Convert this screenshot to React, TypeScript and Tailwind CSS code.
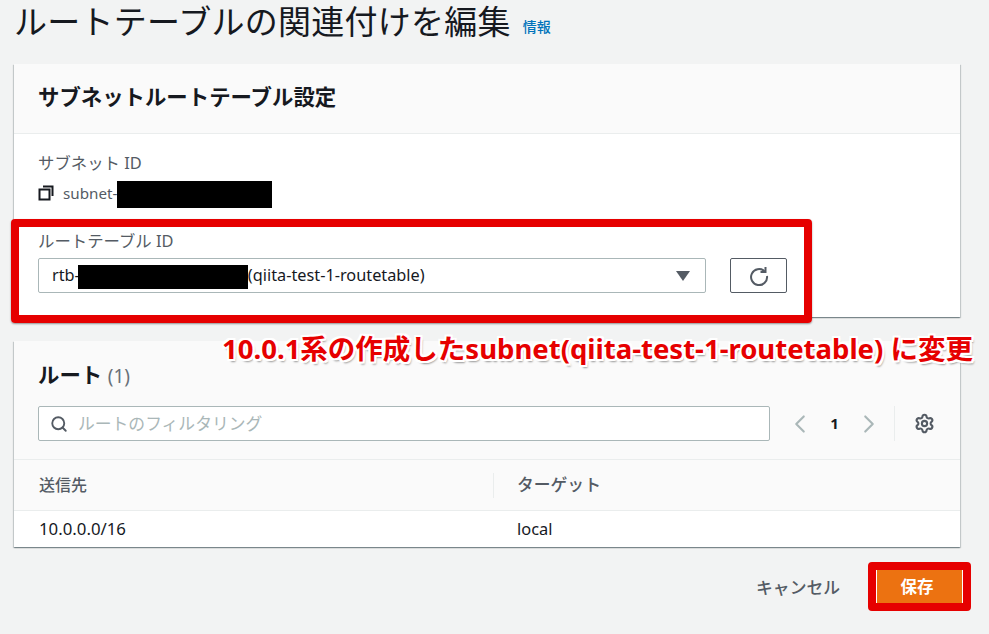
import React from 'react';
import { ChevronLeft, ChevronRight, Search, Settings } from 'lucide-react';

const FONT = '[font-family:"Noto_Sans","Noto_Sans_CJK_JP",sans-serif]';

export default function App() {
  return (
    <div className={`relative h-[634px] w-[989px] overflow-hidden bg-[#f2f3f3] text-[#16191f] ${FONT}`}>
      {/* title */}
      <div className="flex h-[64px] items-start pl-[14px]">
        <h1 className="text-[33px] leading-[44px] font-normal tracking-[0.25px] whitespace-nowrap text-[#16191f]">ルートテーブルの関連付けを編集</h1>
        <a className="mt-[17px] ml-[12px] text-[14px] leading-[20px] font-medium text-[#0073bb]">情報</a>
      </div>

      <div className="ml-[14px] w-[946px]">
        {/* settings card */}
        <section className="h-[253px] bg-white shadow-[0_1px_1px_0_rgba(0,28,36,0.3),1px_1px_1px_0_rgba(0,28,36,0.15),-1px_1px_1px_0_rgba(0,28,36,0.15)]">
          <div className="flex h-[70px] items-center border-b border-[#eaeded] bg-[#fafafa] pb-[3px] pl-[24px]">
            <h2 className="text-[21.4px] leading-[24px] font-bold">サブネットルートテーブル設定</h2>
          </div>
          <div className="pt-[19px] pl-[24px]">
            <div className="text-[16.4px] leading-[20px] text-[#545b64]">サブネット ID</div>
            <div className="mt-[10px] flex h-[20px] items-center gap-[9px] text-[15.2px] text-[#545b64]">
              <svg width="16" height="16" viewBox="0 0 16 16" fill="none" stroke="#16191f" strokeWidth="2">
                <rect x="1.5" y="4.5" width="10" height="10" />
                <path d="M5 1.5h9.5V11" />
              </svg>
              <span>subnet-</span>
            </div>
            <div className="mt-[28px] text-[16.4px] leading-[20px] text-[#545b64]">ルートテーブル ID</div>
            <div className="mt-[7px] flex items-center gap-[24px]">
              <div className="flex h-[35px] w-[668px] items-center justify-between rounded-[2px] border border-[#aab7b8] pr-[15px] pl-[13px] text-[16.3px] text-[#16191f]">
                <span className="whitespace-nowrap">
                  rtb-<span className="inline-block w-[168px]"></span>(qiita-test-1-routetable)
                </span>
                <span className="h-0 w-0 border-x-[7px] border-t-[10px] border-x-transparent border-t-[#545b64]"></span>
              </div>
              <button className="flex h-[35px] w-[57px] items-center justify-center rounded-[2px] border border-[#545b64] bg-white">
                <svg width="20" height="20" viewBox="0 0 20 20" fill="none" stroke="#545b64" strokeWidth="2">
                  <path d="M15.5 5.2A8 8 0 1 0 18 10" />
                  <path d="M16.5 1v5h-5" />
                </svg>
              </button>
            </div>
          </div>
        </section>

        {/* routes card */}
        <section className="mt-[24px] h-[206px] bg-white shadow-[0_1px_1px_0_rgba(0,28,36,0.3),1px_1px_1px_0_rgba(0,28,36,0.15),-1px_1px_1px_0_rgba(0,28,36,0.15)]">
          <div className="h-[119px] border-b border-[#eaeded] bg-[#fafafa] px-[24px]">
            <h2 className="pt-[20px] text-[21.4px] leading-[28px] font-bold whitespace-nowrap">
              ルート <span className="text-[19px] font-normal text-[#687078]">(1)</span>
            </h2>
            <div className="mt-[16px] flex items-center">
              <div className="flex h-[35px] w-[732px] items-center gap-[10px] rounded-[2px] border border-[#aab7b8] bg-white pl-[11px] text-[16.8px] text-[#aab7b8]">
                <Search size={18} strokeWidth={2.5} className="text-[#545b64]" />
                <span>ルートのフィルタリング</span>
              </div>
              <ChevronLeft size={30} strokeWidth={1.7} className="ml-[15px] text-[#aab7b8]" />
              <span className="w-[39px] text-center text-[15px] font-bold">1</span>
              <ChevronRight size={30} strokeWidth={1.7} className="text-[#aab7b8]" />
              <div className="ml-[10px] h-[35px] w-px bg-[#eaeded]"></div>
              <Settings size={21} strokeWidth={2.4} className="ml-[19px] text-[#545b64]" />
            </div>
          </div>
          <div className="flex h-[51px] items-center border-b border-[#eaeded] bg-[#fafafa] text-[16.8px] font-medium text-[#545b64]">
            <div className="w-[479px] pl-[25px] text-[16px]">送信先</div>
            <div className="h-[25px] w-px bg-[#eaeded]"></div>
            <div className="pl-[23px]">ターゲット</div>
          </div>
          <div className="flex h-[36px] items-center text-[16.4px] text-[#16191f]">
            <div className="w-[480px] pl-[25px] text-[16.8px]">10.0.0.0/16</div>
            <div className="pl-[23px]">local</div>
          </div>
        </section>
      </div>

      {/* footer */}
      <div className="mt-[15px] flex items-center justify-end pr-[18px]">
        <button className="mt-[2px] mr-[28px] text-[16.8px] font-medium text-[#545b64]">キャンセル</button>
        <div className="rounded-[4px] border-[8px] border-[#e60000] bg-white px-px">
          <button className="flex h-[33px] w-[85px] items-center justify-center bg-[#ec7211] pt-[2px] pr-[5px] text-[16.5px] font-bold text-white">保存</button>
        </div>
      </div>

      {/* screenshot annotations */}
      <div className="absolute top-[181px] left-[117px] h-[27px] w-[155px] bg-black"></div>
      <div className="absolute top-[265px] left-[78px] h-[24px] w-[170px] bg-black"></div>
      <div className="absolute top-[219px] left-[11px] h-[104px] w-[801px] rounded-[4px] border-[8px] border-[#e60000] shadow-[0_1px_2px_rgba(0,0,0,0.4)]"></div>
      <div className="absolute top-[329px] left-[222px] text-[27.5px] leading-[40px] font-bold whitespace-nowrap text-[#e60000] [text-shadow:2px_0_0_#fff,-2px_0_0_#fff,0_2px_0_#fff,0_-2px_0_#fff,2px_2px_0_#fff,-2px_2px_0_#fff,2px_-2px_0_#fff,-2px_-2px_0_#fff,2px_3px_2px_rgba(0,0,0,0.4)]">
        10.0.1系の作成したsubnet(qiita-test-1-routetable) に変更
      </div>
    </div>
  );
}
